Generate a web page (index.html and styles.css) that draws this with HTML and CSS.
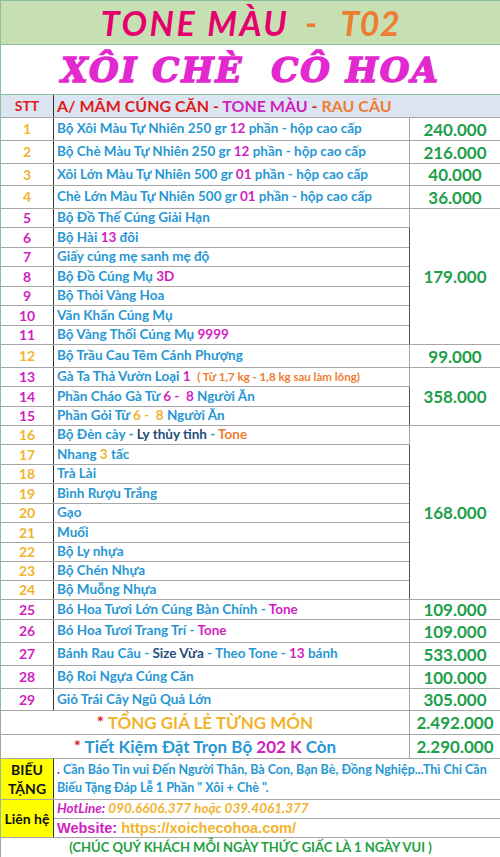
FILE: index.html
```html
<!DOCTYPE html>
<html lang="vi">
<head>
<meta charset="utf-8">
<title>Xôi Chè Cô Hoa - Tone Màu T02</title>
<link rel="stylesheet" href="styles.css">
</head>
<body>
<table class="sheet">
  <colgroup><col class="c1"><col class="c2"><col class="c3"></colgroup>
  <tr class="h44"><td colspan="3" class="title1"><span class="pk">TONE MÀU</span><span class="or">&nbsp; - &nbsp;&nbsp;T02</span></td></tr>
  <tr class="h50"><td colspan="3" class="title2">XÔI CHÈ&nbsp; CÔ HOA</td></tr>
  <tr class="h23 head"><td class="stt red">STT</td><td colspan="2" class="hd"><span class="red">A/ MÂM CÚNG CĂN - </span><span class="mg">TONE MÀU</span><span class="red"> - </span><span class="or">RAU CÂU</span></td></tr>

  <tr class="h23"><td class="stt gd">1</td><td class="d">Bộ Xôi Màu Tự Nhiên 250 gr <span class="mg">12</span> phần - hộp cao cấp</td><td class="p">240.000</td></tr>
  <tr class="h23"><td class="stt gd">2</td><td class="d">Bộ Chè Màu Tự Nhiên 250 gr <span class="mg">12</span> phần - hộp cao cấp</td><td class="p">216.000</td></tr>
  <tr class="h22"><td class="stt gd">3</td><td class="d">Xôi Lớn Màu Tự Nhiên 500 gr <span class="mg">01</span> phần - hộp cao cấp</td><td class="p">40.000</td></tr>
  <tr class="h23"><td class="stt gd">4</td><td class="d">Chè Lớn Màu Tự Nhiên 500 gr <span class="mg">01</span> phần - hộp cao cấp</td><td class="p">36.000</td></tr>

  <tr class="h19 gtop"><td class="stt mg">5</td><td class="d">Bộ Đồ Thế Cúng Giải Hạn</td><td class="p" rowspan="7">179.000</td></tr>
  <tr class="h20"><td class="stt mg">6</td><td class="d">Bộ Hài <span class="mg">13</span> đôi</td></tr>
  <tr class="h19"><td class="stt mg">7</td><td class="d">Giấy cúng mẹ sanh mẹ độ</td></tr>
  <tr class="h20"><td class="stt mg">8</td><td class="d">Bộ Đồ Cúng Mụ <span class="mg">3D</span></td></tr>
  <tr class="h19"><td class="stt mg">9</td><td class="d">Bộ Thỏi Vàng Hoa</td></tr>
  <tr class="h20"><td class="stt mg">10</td><td class="d">Văn Khấn Cúng Mụ</td></tr>
  <tr class="h19"><td class="stt mg">11</td><td class="d">Bộ Vàng Thối Cúng Mụ <span class="mg">9999</span></td></tr>

  <tr class="h23 gtop"><td class="stt gd">12</td><td class="d">Bộ Trầu Cau Têm Cánh Phượng</td><td class="p">99.000</td></tr>

  <tr class="h19 gtop"><td class="stt mg">13</td><td class="d">Gà Ta Thả Vườn Loại <span class="mg">1</span>&nbsp; <span class="note">( Từ 1,7 kg - 1,8 kg sau làm lông)</span></td><td class="p" rowspan="3">358.000</td></tr>
  <tr class="h20"><td class="stt mg">14</td><td class="d">Phần Cháo Gà Từ <span class="mg">6 - &nbsp;8</span> Người Ăn</td></tr>
  <tr class="h19"><td class="stt mg">15</td><td class="d">Phần Gỏi Từ <span class="gd">6 - &nbsp;8</span> Người Ăn</td></tr>

  <tr class="h19 gtop"><td class="stt gd">16</td><td class="d">Bộ Đèn cày - <span class="db">Ly thủy tinh</span> - <span class="or">Tone</span></td><td class="p" rowspan="9">168.000</td></tr>
  <tr class="h20"><td class="stt gd">17</td><td class="d">Nhang <span class="gd">3</span> tấc</td></tr>
  <tr class="h19"><td class="stt gd">18</td><td class="d">Trà Lài</td></tr>
  <tr class="h20"><td class="stt gd">19</td><td class="d">Bình Rượu Trắng</td></tr>
  <tr class="h19"><td class="stt gd">20</td><td class="d">Gạo</td></tr>
  <tr class="h20"><td class="stt gd">21</td><td class="d">Muối</td></tr>
  <tr class="h19"><td class="stt gd">22</td><td class="d">Bộ Ly nhựa</td></tr>
  <tr class="h19"><td class="stt gd">23</td><td class="d">Bộ Chén Nhựa</td></tr>
  <tr class="h19"><td class="stt gd">24</td><td class="d">Bộ Muỗng Nhựa</td></tr>

  <tr class="h20 gtop"><td class="stt mg">25</td><td class="d">Bó Hoa Tươi Lớn Cúng Bàn Chính - <span class="mg">Tone</span></td><td class="p">109.000</td></tr>
  <tr class="h23"><td class="stt mg">26</td><td class="d">Bó Hoa Tươi Trang Trí - <span class="mg">Tone</span></td><td class="p">109.000</td></tr>
  <tr class="h23"><td class="stt mg">27</td><td class="d">Bánh Rau Câu - <span class="db">Size Vừa</span> - Theo Tone - <span class="mg">13</span> bánh</td><td class="p">533.000</td></tr>
  <tr class="h23 gtop"><td class="stt mg">28</td><td class="d">Bộ Roi Ngựa Cúng Căn</td><td class="p">100.000</td></tr>
  <tr class="h22"><td class="stt mg">29</td><td class="d">Giỏ Trái Cây Ngũ Quả Lớn</td><td class="p">305.000</td></tr>

  <tr class="h24 gtop"><td colspan="2" class="tot"><span class="red">* </span><span class="gd">TỔNG GIÁ LẺ TỪNG MÓN</span></td><td class="p big gd">2.492.000</td></tr>
  <tr class="h24"><td colspan="2" class="tot"><span class="red">* </span><span class="bl">Tiết Kiệm Đặt Trọn Bộ </span><span class="mg">202 K</span><span class="bl"> Còn</span></td><td class="p big mg">2.290.000</td></tr>

  <tr class="h41 gtop"><td class="lab">BIẾU<br>TẶNG</td><td colspan="2" class="gift"><span class="mg">.</span> Cần Báo Tin vui Đến Người Thân, Bà Con, Bạn Bè, Đồng Nghiệp...Thì Chỉ Cần<br><span>Biếu Tặng Đáp Lễ 1 Phần " Xôi + Chè ".</span></td></tr>
  <tr class="h19 gtop"><td class="lab" rowspan="2">Liên hệ</td><td colspan="2" class="hot"><span class="mg">HotLine:</span><span class="gd"> 090.6606.377 hoặc 039.4061.377</span></td></tr>
  <tr class="h19"><td colspan="2" class="web"><span class="mg">Website:</span><span class="gd"> https://xoichecohoa.com/</span></td></tr>
  <tr class="h20 gtop"><td colspan="3" class="wish">(CHÚC QUÝ KHÁCH MỖI NGÀY THỨC GIẤC LÀ 1 NGÀY VUI )</td></tr>
</table>
</body>
</html>
```

FILE: styles.css
```css
html, body {
  margin: 0;
  padding: 0;
  background: #ffffff;
}

.sheet {
  width: 500px;
  border-collapse: collapse;
  table-layout: fixed;
  font-family: Lato, "Noto Sans", sans-serif;
  font-weight: 700;
  font-size: 13.5px;
  color: #2797d4;
}

.c1 { width: 53px; }
.c2 { width: 356px; }
.c3 { width: 91px; }

.sheet td {
  padding: 0;
  border: 1px solid #a6a6a6;
  white-space: nowrap;
  overflow: hidden;
  line-height: 1;
}

.h19 { height: 19px; }
.h20 { height: 20px; }
.h22 { height: 22px; }
.h23 { height: 23px; }
.h24 { height: 24px; }
.h41 { height: 41px; }
.h44 { height: 44px; }
.h50 { height: 50px; }

.gtop td { border-top-color: #4d4d4d; }

.sheet td.stt { text-align: center; font-size: 14px; border-right-color: #333333; border-left-color: #8cbf9e; }
.sheet td.p { text-align: center; font-size: 17px; color: #1e9f4c; border-left-color: #555555; border-right-color: #8cbf9e; }
.sheet td.d { padding-left: 3px; }

.title1 {
  background: #c6e0b4;
  text-align: center;
  font-style: italic;
  font-size: 34px;
  border-color: #8cbf9e !important;
}
.title1 .pk { letter-spacing: 2.5px; }
.title1 .or { letter-spacing: 0.5px; }

.title2 {
  background: #ffffff;
  text-align: center;
  font-family: "DejaVu Serif", serif;
  font-style: italic;
  font-weight: 900;
  font-size: 34px;
  letter-spacing: 2px;
  color: #e228cf;
  -webkit-text-stroke: 1.5px #e228cf;
  border-color: #8cbf9e !important;
}
.head td { background: #dbe5f1; font-size: 16px; }
.head td.hd { padding-left: 3px; }

.tot { text-align: center; font-size: 17px; }
.big { font-size: 17px; }

.sheet td.lab {
  background: #ffff00;
  color: #111111;
  text-align: center;
  font-size: 14px;
  line-height: 19px;
  border-right-color: #333333;
  border-left-color: #8cbf9e;
}
.sheet td.gift {
  font-size: 12.5px;
  line-height: 18px;
  padding-left: 3px;
  white-space: nowrap;
}
.sheet td.hot {
  font-style: italic;
  font-size: 13.5px;
  padding-left: 3px;
}
.sheet td.web {
  font-family: "Liberation Sans", Arial, sans-serif;
  font-size: 14.5px;
  padding-left: 3px;
}
.sheet td.wish {
  text-align: center;
  color: #22a040;
  font-size: 13px;
}
.note { font-size: 11.5px; color: #ed7d31; }

.red { color: #e01b1b; }
.mg { color: #d01fbf; }
.gd { color: #f2b32e; }
.or { color: #ed7d31; }
.pk { color: #e6006e; }
.db { color: #1f4e79; }
.bl { color: #2797d4; }
```
